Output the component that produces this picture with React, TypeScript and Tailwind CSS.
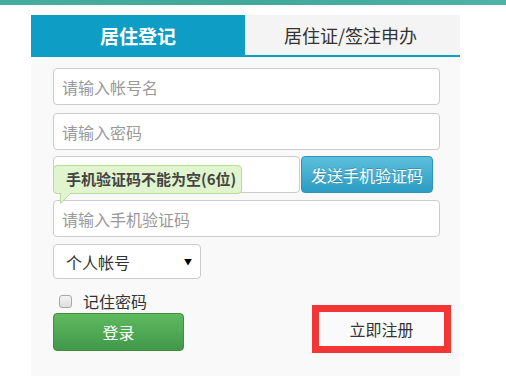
import React from "react";

export default function App() {
  return (
    <div className="w-[506px] h-[376px] bg-white overflow-hidden font-['Noto_Sans_CJK_SC','Liberation_Sans',sans-serif] text-[#333]">
      <div className="h-[5px] bg-gradient-to-r from-[#47ad9d] via-[#3fa99a] to-[#4cb3a6]" />
      <div className="pl-[31px] pt-[10px]">
        <div className="w-[429px] h-[361px] bg-[#f9f9f9]">
          <div className="flex h-[42px]">
            <div className="w-[214px] h-[42px] bg-[#0e9dc4] text-white text-[19px] font-bold flex items-center justify-center">
              居住登记
            </div>
            <div className="flex-1 h-[42px] bg-[#f4f4f4] border-b-[2px] border-[#0e9dc4] text-[18px] flex items-center justify-center pr-[4px]">
              居住证/签注申办
            </div>
          </div>
          <div className="pl-[22px] pt-[11px] flex flex-col">
            <input
              className="w-[387px] h-[37px] bg-white border border-[#ccc] rounded-[4px] px-[8px] text-[16px] placeholder:text-[#999] outline-none"
              placeholder="请输入帐号名"
            />
            <input
              className="mt-[8px] w-[387px] h-[37px] bg-white border border-[#ccc] rounded-[4px] px-[8px] text-[16px] placeholder:text-[#999] outline-none"
              placeholder="请输入密码"
            />
            <div className="relative mt-[6px] flex items-center h-[37px]">
              <input className="w-[247px] h-[37px] bg-white border border-[#ccc] rounded-[4px] px-[8px] text-[16px] outline-none" />
              <button className="ml-[1px] w-[132px] h-[37px] rounded-[4px] border border-[#2b94b8] bg-gradient-to-b from-[#5bbfdc] to-[#2b9cc2] text-white text-[16px] [text-shadow:0_-1px_0_rgba(0,0,0,0.2)]">
                发送手机验证码
              </button>
              <div className="absolute left-0 top-[9px] w-[189px] h-[29px] bg-[#e0f4cd] border border-[#b7dd9c] rounded-[4px] flex items-center pl-[12px] text-[15px] font-bold text-[#444] whitespace-nowrap">
                手机验证码不能为空(6位)
                <svg className="absolute left-[6px] top-[27px]" width="12" height="11" viewBox="0 0 12 11">
                  <polygon points="0.5,0 11,0 1,10.5" fill="#e0f4cd" />
                  <polyline points="0.5,0 0.5,10.5 11,0" fill="none" stroke="#b7dd9c" strokeWidth="1" />
                </svg>
              </div>
            </div>
            <input
              className="mt-[7px] w-[387px] h-[37px] bg-white border border-[#ccc] rounded-[4px] px-[8px] text-[16px] placeholder:text-[#999] outline-none"
              placeholder="请输入手机验证码"
            />
            <div className="mt-[7px] w-[148px] h-[35px] bg-white border border-[#ccc] rounded-[4px] flex items-center justify-between pl-[12px] pr-[8px] text-[16px]">
              <span>个人帐号</span>
              <span className="text-[8px] text-black">▼</span>
            </div>
            <div className="flex items-start mt-[14px]">
              <div className="flex flex-col w-[131px]">
                <div className="flex items-center h-[16px]">
                  <div className="ml-[6px] w-[13px] h-[13px] rounded-[3px] border border-[#a9a9a9] bg-gradient-to-b from-[#f4f4f4] to-[#dedede]" />
                  <span className="ml-[11px] text-[16px] leading-none">记住密码</span>
                </div>
                <button className="mt-[4px] w-[131px] h-[38px] rounded-[4px] border border-[#3e8f3e] bg-gradient-to-b from-[#5fba5f] to-[#42984a] text-white text-[16px]">
                  登录
                </button>
              </div>
              <div className="ml-[128px] mt-[12px] w-[139px] h-[48px] border-[7px] border-[#f23636] bg-[#fafafa] flex items-center justify-center text-[16px]">
                立即注册
              </div>
            </div>
          </div>
        </div>
      </div>
    </div>
  );
}
